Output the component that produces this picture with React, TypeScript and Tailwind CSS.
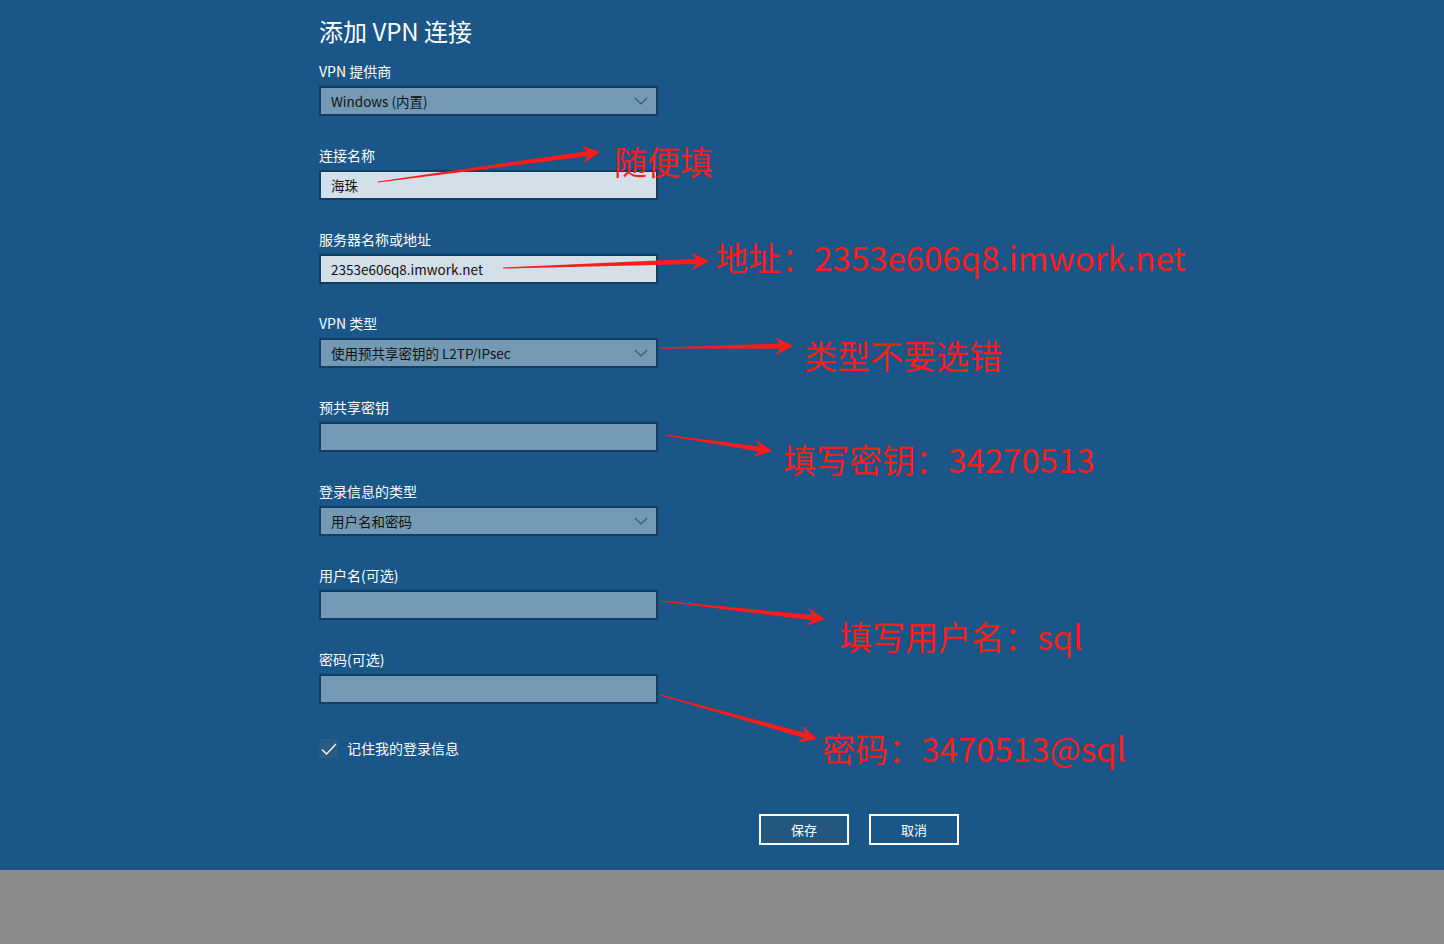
import React from "react";

const FONT = { fontFamily: '"Segoe UI", "Noto Sans", "Noto Sans CJK SC", sans-serif' };
const CJK = { fontFamily: '"Noto Sans CJK SC", "Noto Sans", sans-serif' };

function Chevron() {
  return (
    <svg width="14" height="8" viewBox="0 0 14 8" className="shrink-0">
      <path d="M1 1 L7 7 L13 1" fill="none" stroke="#3f5568" strokeWidth="1.2" />
    </svg>
  );
}

function Field({
  label,
  value,
  kind,
}: {
  label: string;
  value?: string;
  kind: "select" | "text" | "empty";
}) {
  const bg = kind === "text" ? "bg-[#d3dfe9]" : "bg-[#7499b4]";
  return (
    <div className="flex flex-col">
      <div className="h-[20px] leading-[20px] text-[14px] text-white">{label}</div>
      <div
        className={`mt-[5px] h-[30px] w-[339px] border-2 border-[#123d60] ${bg} flex items-center justify-between pl-[10px] pr-[8px]`}
      >
        <span className="text-[13.5px] text-[#111] leading-[20px] pb-[1px]">{value ?? ""}</span>
        {kind === "select" && <Chevron />}
      </div>
    </div>
  );
}

type P = [number, number];
function arrowPoints(tail: P, tip: P) {
  const dx = tip[0] - tail[0];
  const dy = tip[1] - tail[1];
  const len = Math.hypot(dx, dy);
  const ux = dx / len;
  const uy = dy / len;
  const nx = -uy;
  const ny = ux;
  const base: P = [tip[0] - 13 * ux, tip[1] - 13 * uy];
  const barb: P = [tip[0] - 18 * ux, tip[1] - 18 * uy];
  const pts: P[] = [
    [tail[0] + nx * 0.6, tail[1] + ny * 0.6],
    [base[0] + nx * 2.6, base[1] + ny * 2.6],
    [barb[0] + nx * 9, barb[1] + ny * 9],
    tip,
    [barb[0] - nx * 9, barb[1] - ny * 9],
    [base[0] - nx * 2.6, base[1] - ny * 2.6],
    [tail[0] - nx * 0.6, tail[1] - ny * 0.6],
  ];
  return pts.map((p) => `${p[0].toFixed(1)},${p[1].toFixed(1)}`).join(" ");
}

const ARROWS: [P, P][] = [
  [[378, 182], [600, 152]],
  [[503, 268], [709, 261]],
  [[659, 348], [793, 346]],
  [[665, 435], [772, 451]],
  [[661, 601], [825, 619]],
  [[660, 695], [817, 739]],
];

const NOTES: { text: string; left: number; top: number }[] = [
  { text: "随便填", left: 614, top: 145 },
  { text: "地址：2353e606q8.imwork.net", left: 715, top: 241 },
  { text: "类型不要选错", left: 804, top: 339 },
  { text: "填写密钥：34270513", left: 783, top: 443 },
  { text: "填写用户名：sql", left: 839, top: 620 },
  { text: "密码：3470513@sql", left: 822, top: 732 },
];

export default function App() {
  return (
    <div className="w-[1444px] h-[944px] overflow-hidden flex flex-col" style={FONT}>
      <div className="relative h-[870px] bg-[#1a5687] pl-[319px] pt-[15px] flex flex-col">
        <div className="h-[32px] leading-[32px] text-[24px] text-white" style={CJK}>
          添加 VPN 连接
        </div>
        <div className="mt-[14px] flex flex-col gap-[29px]" style={CJK}>
          <Field label="VPN 提供商" value="Windows (内置)" kind="select" />
          <Field label="连接名称" value="海珠" kind="text" />
          <Field label="服务器名称或地址" value="2353e606q8.imwork.net" kind="text" />
          <Field label="VPN 类型" value="使用预共享密钥的 L2TP/IPsec" kind="select" />
          <Field label="预共享密钥" kind="empty" />
          <Field label="登录信息的类型" value="用户名和密码" kind="select" />
          <Field label="用户名(可选)" kind="empty" />
          <Field label="密码(可选)" kind="empty" />
        </div>
        <div className="mt-[34px] flex items-center gap-[9px]" style={CJK}>
          <div className="w-[19px] h-[19px] bg-[#2b5b80] flex items-center justify-center">
            <svg width="16" height="12" viewBox="0 0 16 12">
              <path d="M1 6.5 L5.5 11 L15 1" fill="none" stroke="#ffffff" strokeWidth="1.3" />
            </svg>
          </div>
          <span className="text-[14px] text-white">记住我的登录信息</span>
        </div>
        <div className="mt-[55px] pl-[440px] flex gap-[20px]" style={CJK}>
          <button className="w-[90px] h-[31px] border-2 border-white bg-[#25587f] text-[13px] text-white">
            保存
          </button>
          <button className="w-[90px] h-[31px] border-2 border-white bg-transparent text-[13px] text-white">
            取消
          </button>
        </div>

        <svg className="absolute inset-0 pointer-events-none" width="1444" height="870">
          {ARROWS.map(([a, b], i) => (
            <polygon key={i} points={arrowPoints(a, b)} fill="#fb1c1c" />
          ))}
        </svg>
        {NOTES.map((n, i) => (
          <div
            key={i}
            className="absolute text-[33px] leading-[33px] text-[#fb1c1c] whitespace-nowrap"
            style={{ left: n.left, top: n.top, ...CJK }}
          >
            {n.text}
          </div>
        ))}
      </div>
      <div className="flex-1 bg-[#8c8c8c]" />
    </div>
  );
}
